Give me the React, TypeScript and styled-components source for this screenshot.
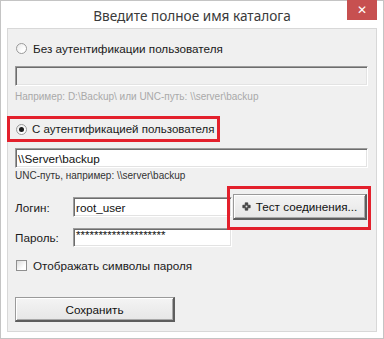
import React from "react";
import styled, { createGlobalStyle } from "styled-components";

const Global = createGlobalStyle`
  html, body { margin: 0; padding: 0; background: #ffffff; }
  * { box-sizing: border-box; }
`;

const RED = "#e3202c";

const Window = styled.div`
  width: 384px;
  height: 339px;
  border: 1px solid #c4c4c4;
  background: #ffffff;
  display: flex;
  flex-direction: column;
  font-family: "Liberation Sans", Arial, sans-serif;
  color: #1a1a1a;
`;

const TitleBar = styled.div`
  position: relative;
  height: 27px;
  display: flex;
  align-items: center;
  justify-content: center;
  font-family: "Noto Sans", "Open Sans", sans-serif;
  font-size: 13.6px;
  color: #3a3a3a;
  padding-top: 2px;
`;

const CloseButton = styled.div`
  position: absolute;
  top: -1px;
  right: 6px;
  width: 30px;
  height: 20px;
  background: #c75050;
  color: #ffffff;
  display: flex;
  align-items: center;
  justify-content: center;
  font-family: "DejaVu Sans", sans-serif;
  font-size: 12px;
  font-weight: bold;
`;

const Panel = styled.div`
  flex: 1;
  margin: 0 6px 6px 6px;
  background: #f0f0f0;
  border: 1px solid #d8d8d8;
  padding: 0 8px 0 7px;
  display: flex;
  flex-direction: column;
`;

const OptionRow = styled.label<{ $mt?: number }>`
  display: flex;
  align-items: center;
  gap: 6px;
  height: 16px;
  margin-top: ${(p) => p.$mt ?? 0}px;
  padding-left: 1px;
  font-size: 11.7px;
  white-space: nowrap;
`;

const RadioHighlight = styled.div`
  margin-top: 13px;
  margin-left: -8px;
  width: 213px;
  height: 26px;
  border: 3px solid ${RED};
  display: flex;
  align-items: center;
  padding-left: 6px;
  font-size: 11.5px;
  gap: 5px;
  white-space: nowrap;
`;

const Radio = styled.span<{ $checked?: boolean }>`
  width: 11px;
  height: 11px;
  border-radius: 50%;
  border: 1px solid #9a9a9a;
  background: linear-gradient(135deg, #e8e8e8, #ffffff 70%);
  display: flex;
  align-items: center;
  justify-content: center;
  flex: none;
  &::after {
    content: "";
    display: ${(p) => (p.$checked ? "block" : "none")};
    width: 5px;
    height: 5px;
    border-radius: 50%;
    background: #1c1c1c;
  }
`;

const Check = styled.span`
  width: 11px;
  height: 11px;
  border: 1px solid #8f8f8f;
  background: linear-gradient(135deg, #dcdcdc, #ffffff 70%);
  flex: none;
`;

const TextField = styled.div<{ $disabled?: boolean; $w?: number; $h?: number; $mt?: number }>`
  width: ${(p) => (p.$w ? `${p.$w}px` : "100%")};
  height: ${(p) => p.$h ?? 20}px;
  margin-top: ${(p) => p.$mt ?? 0}px;
  background: ${(p) => (p.$disabled ? "#f0f0f0" : "#ffffff")};
  border-top: 1px solid #9c9c9c;
  border-left: 1px solid #9c9c9c;
  border-right: 1px solid #ffffff;
  border-bottom: 1px solid #ffffff;
  box-shadow: inset 1px 1px 0 #6d6d6d, inset -1px -1px 0 #e3e3e3;
  display: flex;
  align-items: center;
  padding-left: 2px;
  font-size: 11.7px;
  color: #111;
  flex: none;
  white-space: nowrap;
  overflow: hidden;
`;

const Stars = styled.span`
  font-size: 11.5px;
  transform: translateY(-2px);
`;

const Hint = styled.div<{ $muted?: boolean; $mt: number }>`
  margin-top: ${(p) => p.$mt}px;
  font-size: 10px;
  line-height: 12px;
  color: ${(p) => (p.$muted ? "#a9a9a9" : "#333333")};
  white-space: nowrap;
`;

const FieldRow = styled.div<{ $mt: number; $h: number }>`
  display: flex;
  align-items: center;
  height: ${(p) => p.$h}px;
  margin-top: ${(p) => p.$mt}px;
`;

const FieldLabel = styled.span`
  width: 58px;
  font-size: 11.7px;
  flex: none;
`;

const ButtonWrap = styled.div`
  position: relative;
  margin-left: 1px;
`;

const Highlight = styled.div`
  position: absolute;
  top: -8px;
  left: -6px;
  right: -4px;
  bottom: -10px;
  border: 3px solid ${RED};
  pointer-events: none;
`;

const Button = styled.button<{ $w: number; $h: number }>`
  width: ${(p) => p.$w}px;
  height: ${(p) => p.$h}px;
  background: linear-gradient(#f4f4f4, #e6e6e6);
  border-top: 1px solid #9a9a9a;
  border-left: 1px solid #9a9a9a;
  border-right: 2px solid #5e5e5e;
  border-bottom: 2px solid #5e5e5e;
  box-shadow: inset 1px 1px 0 #ffffff, inset -1px -1px 0 #a8a8a8;
  font-family: "Liberation Sans", Arial, sans-serif;
  font-size: 11.7px;
  color: #111;
  display: flex;
  align-items: center;
  justify-content: center;
  gap: 5px;
  padding: 0;
  white-space: nowrap;
`;

const SaveButton = styled(Button)`
  margin-top: 24px;
`;

const PlugIcon = () => (
  <svg width="9" height="9" viewBox="0 0 9 9">
    <path
      d="M3.2 0.8h2.6v2.4h2.4v2.6H5.8v2.4H3.2V5.8H0.8V3.2h2.4z"
      fill="#4a4a4a"
      stroke="#2e2e2e"
      strokeWidth="0.6"
      strokeLinejoin="round"
    />
    <circle cx="4.5" cy="4.5" r="1" fill="#dcdcdc" />
  </svg>
);

export default function App() {
  return (
    <>
      <Global />
      <Window>
        <TitleBar>
          Введите полное имя каталога
          <CloseButton>✕</CloseButton>
        </TitleBar>
        <Panel>
          <OptionRow $mt={11}>
            <Radio />
            Без аутентификации пользователя
          </OptionRow>
          <TextField $disabled $mt={10} />
          <Hint $muted $mt={5}>
            Например: D:\Backup\ или UNC-путь: \\server\backup
          </Hint>
          <RadioHighlight>
            <Radio $checked />
            С аутентификацией пользователя
          </RadioHighlight>
          <TextField $mt={6}>\\Server\backup</TextField>
          <Hint $mt={2}>UNC-путь, например: \\server\backup</Hint>
          <FieldRow $mt={12} $h={26}>
            <FieldLabel>Логин:</FieldLabel>
            <TextField $w={159} $h={20}>
              root_user
            </TextField>
            <ButtonWrap>
              <Button $w={134} $h={26}>
                <PlugIcon />
                Тест соединения...
              </Button>
              <Highlight />
            </ButtonWrap>
          </FieldRow>
          <FieldRow $mt={7} $h={20}>
            <FieldLabel>Пароль:</FieldLabel>
            <TextField $w={159} $h={19}>
              <Stars>********************</Stars>
            </TextField>
          </FieldRow>
          <OptionRow $mt={10}>
            <Check />
            Отображать символы пароля
          </OptionRow>
          <SaveButton $w={160} $h={25}>
            Сохранить
          </SaveButton>
        </Panel>
      </Window>
    </>
  );
}
